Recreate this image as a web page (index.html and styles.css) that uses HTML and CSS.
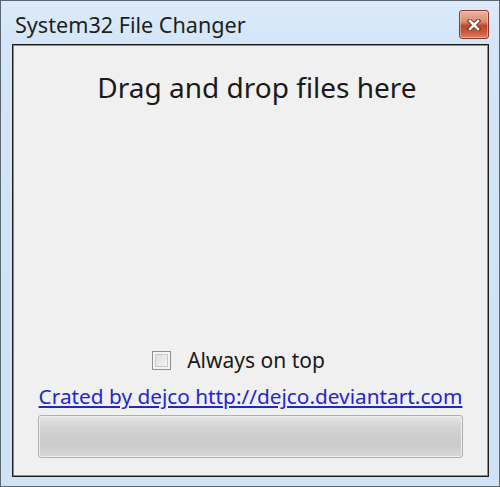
FILE: index.html
```
<!DOCTYPE html>
<html>
<head>
<meta charset="utf-8">
<link rel="stylesheet" href="styles.css">
</head>
<body>
<div class="window">
  <div class="titlebar">
    <span class="title">System32 File Changer</span>
    <div class="close">
      <svg width="14" height="12" viewBox="0 0 14 12">
        <path d="M3 2 L11 10 M11 2 L3 10" stroke="#6a3024" stroke-width="4.5" stroke-linecap="square"/>
        <path d="M3 2 L11 10 M11 2 L3 10" stroke="#ffffff" stroke-width="2.5" stroke-linecap="square"/>
      </svg>
    </div>
  </div>
  <div class="panel">
    <div class="drop">Drag and drop files here</div>
    <div class="spacer"></div>
    <label class="check"><span class="box"></span><span class="check-label">Always on top</span></label>
    <a class="link" href="#">Crated by dejco http://dejco.deviantart.com</a>
    <div class="progress"></div>
  </div>
</div>
</body>
</html>
```
FILE: styles.css
```
html, body {
  margin: 0;
  padding: 0;
  background: #ffffff;
}
.window {
  width: 500px;
  height: 487px;
  box-sizing: border-box;
  border: 1px solid #5b6570;
  background: linear-gradient(to bottom, #dcebfa 0px, #d3e5f7 40px, #cfe2f6 100%);
  display: flex;
  flex-direction: column;
  padding: 0 10px 9px 11px;
  font-family: "Noto Sans", "Open Sans", sans-serif;
}
.titlebar {
  height: 43px;
  display: flex;
  align-items: flex-start;
  justify-content: space-between;
}
.title {
  margin-top: 10px;
  margin-left: 3px;
  font-size: 21.6px;
  line-height: 28px;
  color: #1e1e1e;
}
.close {
  margin-top: 9px;
  width: 30px;
  height: 29px;
  box-sizing: border-box;
  border: 1px solid #8a3a28;
  border-radius: 3px;
  background: linear-gradient(to bottom, #eab4a0 0%, #dc8c70 40%, #c0432a 55%, #cc5a3c 80%, #dd8466 100%);
  box-shadow: inset 0 0 0 1px rgba(255,220,200,0.5);
  display: flex;
  align-items: center;
  justify-content: center;
}
.panel {
  flex: 1;
  border: 1px solid #1c1c1c;
  box-shadow: inset 0 0 0 1px #8c8c8c;
  background: #f0f0f0;
  display: flex;
  flex-direction: column;
  padding: 0 25px 18px 25px;
}
.drop {
  margin-top: 24px;
  text-align: center;
  font-size: 28px;
  line-height: 36px;
  color: #1a1a1a;
  padding-left: 13px;
}
.spacer {
  flex: 1;
}
.check {
  display: flex;
  align-items: center;
  justify-content: center;
  gap: 16px;
  line-height: 24px;
  margin-bottom: 12px;
  padding-right: 24px;
}
.box {
  width: 19px;
  height: 19px;
  box-sizing: border-box;
  border: 1px solid #8e8f8f;
  background: linear-gradient(135deg, #dcdcdc, #f6f6f6);
  box-shadow: inset 0 0 0 2px #f4f4f4, inset 0 0 0 3px #c8c8c8;
}
.check-label {
  font-size: 21px;
  color: #1a1a1a;
}
.link {
  font-size: 20.8px;
  line-height: 24px;
  color: #2525cf;
  text-decoration: underline;
  text-align: center;
  margin-bottom: 7px;
  white-space: nowrap;
}
.progress {
  height: 43px;
  box-sizing: border-box;
  border: 1px solid #b0b0b0;
  border-radius: 3px;
  background: linear-gradient(to bottom, #e6e6e6 0%, #d2d2d2 30%, #cbcbcb 70%, #d8d8d8 100%);
  box-shadow: inset 0 0 0 1px #efefef;
}
```
